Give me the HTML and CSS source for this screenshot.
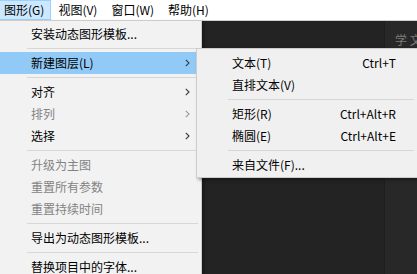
FILE: index.html
```html
<!DOCTYPE html>
<html>
<head>
<meta charset="utf-8">
<link rel="stylesheet" href="styles.css">
</head>
<body>
<div class="menubar">
  <div class="mb-item active">图形(G)</div>
  <div class="mb-item">视图(V)</div>
  <div class="mb-item">窗口(W)</div>
  <div class="mb-item">帮助(H)</div>
</div>
<div class="workspace">
  <div class="panel-left"></div>
  <div class="panel-right"><span class="ghost">学 文</span></div>
</div>

<div class="menu main-menu">
  <div class="item">安装动态图形模板...</div>
  <div class="sep"></div>
  <div class="item hot">新建图层(L)<svg class="chev" viewBox="0 0 5 8" width="5" height="8"><path d="M0.8 0.8 L4 4 L0.8 7.2" /></svg></div>
  <div class="sep"></div>
  <div class="item">对齐<svg class="chev" viewBox="0 0 5 8" width="5" height="8"><path d="M0.8 0.8 L4 4 L0.8 7.2" /></svg></div>
  <div class="item disabled">排列<svg class="chev" viewBox="0 0 5 8" width="5" height="8"><path d="M0.8 0.8 L4 4 L0.8 7.2" /></svg></div>
  <div class="item">选择<svg class="chev" viewBox="0 0 5 8" width="5" height="8"><path d="M0.8 0.8 L4 4 L0.8 7.2" /></svg></div>
  <div class="sep"></div>
  <div class="item disabled">升级为主图</div>
  <div class="item disabled">重置所有参数</div>
  <div class="item disabled">重置持续时间</div>
  <div class="sep"></div>
  <div class="item">导出为动态图形模板...</div>
  <div class="sep"></div>
  <div class="item">替换项目中的字体...</div>
</div>

<div class="menu sub-menu">
  <div class="item"><span class="label">文本(T)</span><span class="key">Ctrl+T</span></div>
  <div class="item"><span class="label">直排文本(V)</span></div>
  <div class="sep"></div>
  <div class="item"><span class="label">矩形(R)</span><span class="key">Ctrl+Alt+R</span></div>
  <div class="item"><span class="label">椭圆(E)</span><span class="key">Ctrl+Alt+E</span></div>
  <div class="sep"></div>
  <div class="item"><span class="label">来自文件(F)...</span></div>
</div>
</body>
</html>
```
FILE: styles.css
```css
html, body {
  margin: 0;
  padding: 0;
  width: 417px;
  height: 274px;
  overflow: hidden;
  background: #252525;
  font-family: "Noto Sans CJK SC", "Noto Sans", sans-serif;
  font-size: 12px;
  color: #000;
}

.menubar {
  display: flex;
  height: 20px;
  background: #ffffff;
  border-bottom: 1px solid #cfcfcf;
  margin-left: -3px;
}

.mb-item {
  padding: 0 6px;
  line-height: 18px;
  border: 1px solid transparent;
  box-sizing: border-box;
  height: 20px;
}

.mb-item.active {
  background: #cce8ff;
  border-color: #99d1ff;
}

.workspace {
  display: flex;
  height: 253px;
}

.panel-left {
  flex: 1;
  background: #232323;
}

.panel-right {
  width: 32px;
  background: #282828;
  border-left: 1px solid #1e1e1e;
}

.ghost {
  display: block;
  margin: 12px 0 0 10px;
  color: #7c7c7c;
  white-space: nowrap;
  line-height: 14px;
}

.menu {
  position: absolute;
  background: #f2f2f2;
  border: 1px solid #cccccc;
  box-shadow: 2px 2px 3px rgba(0, 0, 0, 0.35);
  box-sizing: border-box;
}

.main-menu {
  left: -1px;
  top: 20px;
  width: 203px;
  height: 262px;
  padding-top: 2px;
}

.sub-menu {
  left: 196px;
  top: 48px;
  width: 224px;
  height: 130px;
  padding-top: 3px;
  background: #f0f0f0;
}

.item {
  display: flex;
  align-items: center;
  height: 22px;
  line-height: 22px;
  white-space: nowrap;
}

.main-menu .item {
  padding-left: 31px;
  padding-right: 11px;
}

.main-menu .item.hot {
  background: #91c9f7;
}

.disabled {
  color: #838383;
}

.chev {
  margin-left: auto;
  fill: none;
  stroke: #3a3a3a;
  stroke-width: 1.1;
}

.disabled .chev {
  stroke: #9a9a9a;
}

.sep {
  height: 1px;
  background: #d7d7d7;
  margin: 3px 3px 3px 27px;
}

.sub-menu .item {
  padding-left: 35px;
  padding-right: 23px;
}

.sub-menu .sep {
  margin: 3px 5px 3px 31px;
}

.key {
  margin-left: auto;
}
```
